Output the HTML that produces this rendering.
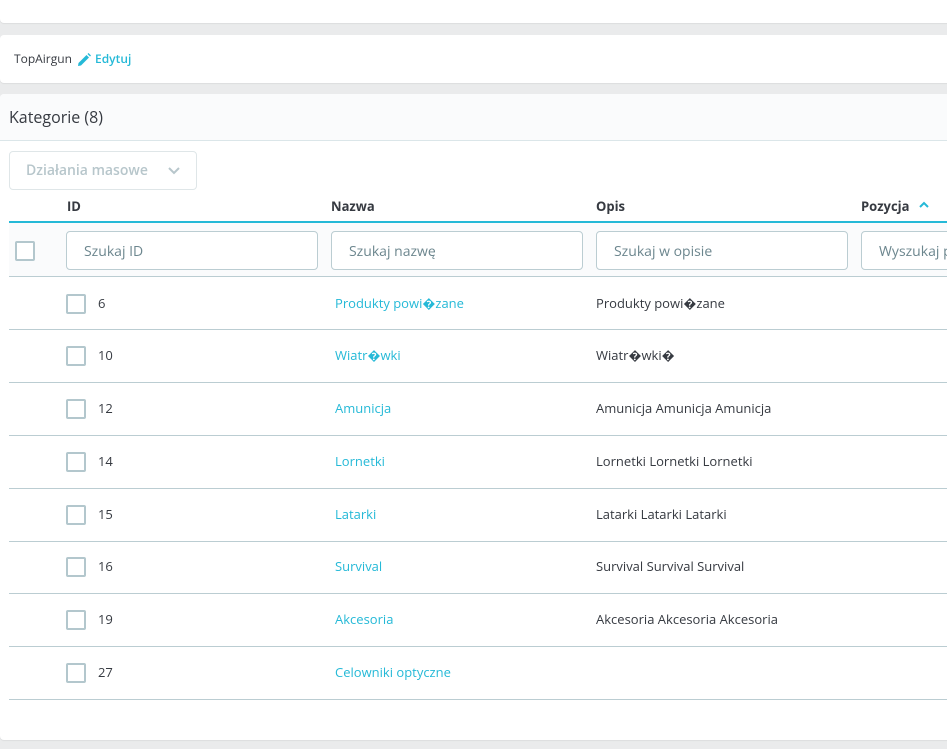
<!DOCTYPE html>
<html><head><meta charset="utf-8"><style>
*{margin:0;padding:0;box-sizing:border-box}
body{width:947px;height:749px;background:#eaebec;font-family:"Open Sans","Liberation Sans","DejaVu Sans",sans-serif;position:relative;overflow:hidden;color:#363a41}
.card{position:absolute;left:0;width:960px;background:#fff;border-radius:4px;box-shadow:0 1px 1px rgba(0,0,0,.06)}
.a{position:absolute;white-space:nowrap}
.inp{position:absolute;top:231px;height:39px;border:1px solid #bbcdd2;border-radius:4px;background:#fff;font-size:14px;color:#6c868e;padding:10px 0 0 17px}
.cb{position:absolute;left:66px;width:20px;height:20px;border:2px solid #b3c7cd;border-radius:2px;background:#fff}
.line{position:absolute;left:9px;width:940px;height:1px;background:#bbcdd2}
.th{position:absolute;top:197px;font-size:13px;font-weight:bold;color:#363a41}
.t{position:absolute;font-size:13px;white-space:nowrap;margin-top:-1px}
.lk{color:#25b9d7}
</style></head><body>
<div class="card" style="top:0;height:23px;border-radius:0 0 4px 4px"></div>
<div class="card" style="top:35px;height:48px">
<div class="a" style="left:14px;top:15px;font-size:12px">TopAirgun</div>
<svg class="a" style="left:77px;top:18px" width="14" height="14" viewBox="0 0 14 14"><path d="M1 13 L1.5 10 L9.5 2 L12 4.5 L4 12.5 Z" fill="#25b9d7"/><path d="M10.5 1 L11.5 0 L14 2.5 L13 3.5Z" fill="#25b9d7"/></svg>
<div class="a lk" style="left:95px;top:15px;font-size:12px;font-weight:600">Edytuj</div>
</div>
<div class="card" style="top:94px;height:646px">
<div style="position:absolute;left:0;top:0;width:100%;height:47px;background:#fafbfc;border-bottom:1px solid #dbe6e9;border-radius:4px 4px 0 0"></div>
<div class="a" style="left:9px;top:12px;font-size:16px;color:#363a41">Kategorie (8)</div>
</div>
<div class="a" style="left:9px;top:151px;width:188px;height:39px;border:1px solid #dfe6e8;border-radius:4px;background:#fff"></div>
<div class="a" style="left:26px;top:161px;font-size:14px;font-weight:600;color:#b7c6cb">Działania masowe</div>
<svg class="a" style="left:167px;top:166px" width="14" height="10" viewBox="0 0 14 10"><path d="M2 2 L7 7 L12 2" stroke="#b7c6cb" stroke-width="2" fill="none"/></svg>
<div class="th" style="left:67px">ID</div>
<div class="th" style="left:331px">Nazwa</div>
<div class="th" style="left:596px">Opis</div>
<div class="th" style="left:861px">Pozycja</div>
<svg class="a" style="left:919px;top:201px" width="10" height="8" viewBox="0 0 10 8"><path d="M1 6 L5 2 L9 6" stroke="#25b9d7" stroke-width="2" fill="none"/></svg>
<div class="a" style="left:9px;top:221px;width:940px;height:55px;background:#fafbfc;border-top:2px solid #25b9d7"></div>
<div class="line" style="top:276px"></div>
<div class="cb" style="left:15px;top:241px"></div>
<div class="inp" style="left:66px;width:252px">Szukaj ID</div>
<div class="inp" style="left:331px;width:252px">Szukaj nazwę</div>
<div class="inp" style="left:596px;width:252px">Szukaj w opisie</div>
<div class="inp" style="left:861px;width:100px">Wyszukaj p</div>

<div class="cb" style="top:294px"></div><div class="t" style="left:98px;top:295px">6</div><div class="t lk" style="left:335px;top:295px">Produkty powi�zane</div><div class="t" style="left:596px;top:295px">Produkty powi�zane</div><div class="line" style="top:329px"></div>
<div class="cb" style="top:346px"></div><div class="t" style="left:98px;top:347px">10</div><div class="t lk" style="left:335px;top:347px">Wiatr�wki</div><div class="t" style="left:596px;top:347px">Wiatr�wki�</div><div class="line" style="top:382px"></div>
<div class="cb" style="top:399px"></div><div class="t" style="left:98px;top:400px">12</div><div class="t lk" style="left:335px;top:400px">Amunicja</div><div class="t" style="left:596px;top:400px">Amunicja Amunicja Amunicja</div><div class="line" style="top:435px"></div>
<div class="cb" style="top:452px"></div><div class="t" style="left:98px;top:453px">14</div><div class="t lk" style="left:335px;top:453px">Lornetki</div><div class="t" style="left:596px;top:453px">Lornetki Lornetki Lornetki</div><div class="line" style="top:488px"></div>
<div class="cb" style="top:505px"></div><div class="t" style="left:98px;top:506px">15</div><div class="t lk" style="left:335px;top:506px">Latarki</div><div class="t" style="left:596px;top:506px">Latarki Latarki Latarki</div><div class="line" style="top:541px"></div>
<div class="cb" style="top:557px"></div><div class="t" style="left:98px;top:558px">16</div><div class="t lk" style="left:335px;top:558px">Survival</div><div class="t" style="left:596px;top:558px">Survival Survival Survival</div><div class="line" style="top:593px"></div>
<div class="cb" style="top:610px"></div><div class="t" style="left:98px;top:611px">19</div><div class="t lk" style="left:335px;top:611px">Akcesoria</div><div class="t" style="left:596px;top:611px">Akcesoria Akcesoria Akcesoria</div><div class="line" style="top:646px"></div>
<div class="cb" style="top:663px"></div><div class="t" style="left:98px;top:664px">27</div><div class="t lk" style="left:335px;top:664px">Celowniki optyczne</div><div class="line" style="top:699px"></div>
</body></html>
